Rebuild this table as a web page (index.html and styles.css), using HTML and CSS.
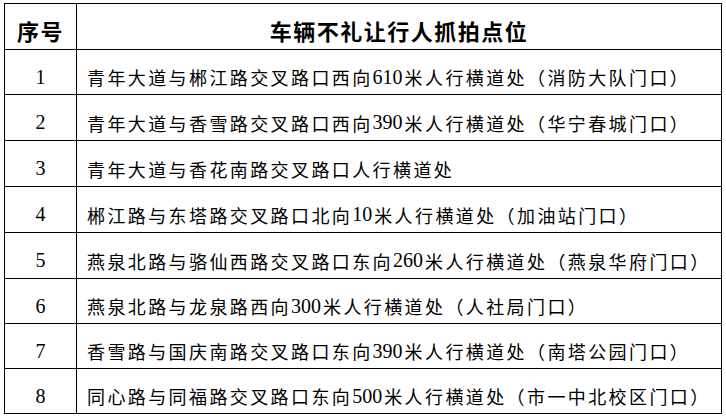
FILE: index.html
```html
<!DOCTYPE html>
<html lang="zh-CN">
<head>
<meta charset="utf-8">
<link rel="stylesheet" href="styles.css">
</head>
<body>
<div class="table">
  <div class="cell head num">序号</div>
  <div class="cell head title">车辆不礼让行人抓拍点位</div>

  <div class="cell num">1</div>
  <div class="cell text">青年大道与郴江路交叉路口西向<span class="d">610</span>米人行横道处（消防大队门口）</div>

  <div class="cell num">2</div>
  <div class="cell text">青年大道与香雪路交叉路口西向<span class="d">390</span>米人行横道处（华宁春城门口）</div>

  <div class="cell num">3</div>
  <div class="cell text">青年大道与香花南路交叉路口人行横道处</div>

  <div class="cell num">4</div>
  <div class="cell text">郴江路与东塔路交叉路口北向<span class="d">10</span>米人行横道处（加油站门口）</div>

  <div class="cell num">5</div>
  <div class="cell text">燕泉北路与骆仙西路交叉路口东向<span class="d">260</span>米人行横道处（燕泉华府门口）</div>

  <div class="cell num">6</div>
  <div class="cell text">燕泉北路与龙泉路西向<span class="d">300</span>米人行横道处（人社局门口）</div>

  <div class="cell num">7</div>
  <div class="cell text">香雪路与国庆南路交叉路口东向<span class="d">390</span>米人行横道处（南塔公园门口）</div>

  <div class="cell num">8</div>
  <div class="cell text">同心路与同福路交叉路口东向<span class="d">500</span>米人行横道处（市一中北校区门口）</div>
</div>
</body>
</html>
```

FILE: styles.css
```css
html, body {
  margin: 0;
  padding: 0;
  background: #ffffff;
}

body {
  padding: 3px 0 0 4px;
  font-family: "Liberation Serif", "Noto Sans CJK SC", serif;
  color: #000;
}

.table {
  display: grid;
  grid-template-columns: 72px 645px;
  grid-template-rows: 46px 45px 46px 46px 46px 46px 45px 45px 45px;
  width: 718px;
  border-top: 1px solid #000;
  border-left: 1px solid #000;
  box-sizing: border-box;
}

.cell {
  display: flex;
  align-items: center;
  border-right: 1px solid #000;
  border-bottom: 1px solid #000;
  padding-top: 10px;
  white-space: nowrap;
  overflow: hidden;
}

.head {
  font-family: "Noto Sans CJK SC", sans-serif;
  font-weight: 700;
  font-size: 22px;
  letter-spacing: 1.5px;
  padding-top: 7px;
}

.num {
  justify-content: center;
  font-size: 20px;
}

.head.num {
  font-size: 22px;
}

.title {
  justify-content: center;
}

.text {
  font-size: 18px;
  font-weight: 400;
  letter-spacing: 2.4px;
  padding-left: 10px;
}

.text .d {
  font-size: 20px;
  letter-spacing: 0;
  margin-right: 2px;
}
```
